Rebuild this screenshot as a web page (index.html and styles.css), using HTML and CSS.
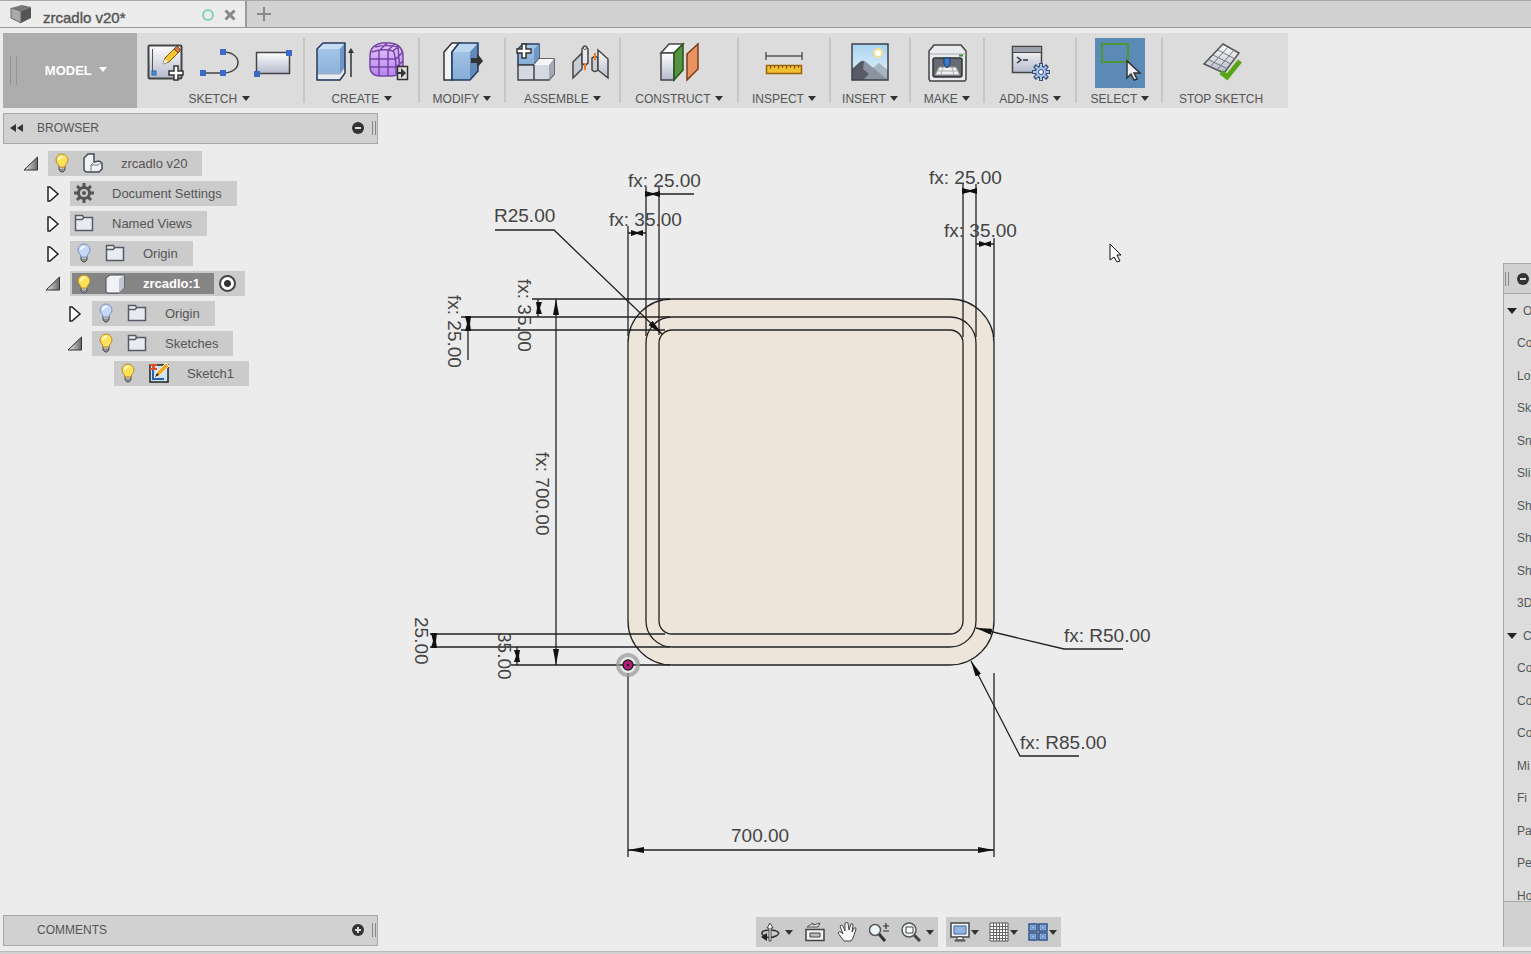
FILE: index.html
```html
<!DOCTYPE html>
<html lang="en">
  <head>
    <meta charset="UTF-8" />
    <title>zrcadlo v20*</title>
    <meta name="viewport" content="width=device-width, initial-scale=1" />
    <link rel="stylesheet" href="styles.css" />
  </head>
  <body>
    <!-- shared gradients and symbols -->
    <svg class="defs" width="0" height="0" aria-hidden="true">
      <defs>
        <linearGradient id="steel" x1="0" y1="0" x2="0" y2="1">
          <stop offset="0" stop-color="#fff" />
          <stop offset="1" stop-color="#b4bacb" />
        </linearGradient>
        <linearGradient id="blue" x1="0" y1="0" x2="0" y2="1">
          <stop offset="0" stop-color="#a9c8e8" />
          <stop offset="1" stop-color="#86add8" />
        </linearGradient>
        <linearGradient id="purple" x1="0" y1="0" x2="0" y2="1">
          <stop offset="0" stop-color="#e6c8fa" />
          <stop offset="1" stop-color="#b883ee" />
        </linearGradient>
        <linearGradient id="sky" x1="0" y1="0" x2="0" y2="1">
          <stop offset="0" stop-color="#a8d4f0" />
          <stop offset="1" stop-color="#e8f4fb" />
        </linearGradient>
        <linearGradient id="wedge" x1="0" y1="0" x2="1" y2="0">
          <stop offset="0" stop-color="#eee" />
          <stop offset="1" stop-color="#666" />
        </linearGradient>
      </defs>
      <symbol id="i-bulb-on" viewBox="0 0 20 20">
        <path d="M7 12h6v5l-2 2H9l-2-2z" fill="#8b8b93" stroke="#555" />
        <path d="M8 15h4" stroke="#eee" />
        <path d="M10 1a6 6 0 0 0-6 6c0 3 3 4 3 7h6c0-3 3-4 3-7a6 6 0 0 0-6-6z" fill="#fde25a" stroke="#b88a2c" />
        <path d="M7 7a3 3 0 0 1 4-3" fill="none" stroke="#fffbd0" stroke-width="2" />
      </symbol>
      <symbol id="i-bulb-off" viewBox="0 0 20 20">
        <path d="M7 12h6v5l-2 2H9l-2-2z" fill="#8b8b93" stroke="#555" />
        <path d="M8 15h4" stroke="#eee" />
        <path d="M10 1a6 6 0 0 0-6 6c0 3 3 4 3 7h6c0-3 3-4 3-7a6 6 0 0 0-6-6z" fill="#c5d8fa" stroke="#7d90bd" />
        <path d="M7 7a3 3 0 0 1 4-3" fill="none" stroke="#f4f8ff" stroke-width="2" />
      </symbol>
      <symbol id="i-folder" viewBox="0 0 20 20">
        <path d="M1.500 17.500v-15h7l1 2h9v13z" fill="#e9ebf0" stroke="#555b66" stroke-width="1.500" />
        <path d="M2 6.500h6l2-2" fill="none" stroke="#555b66" stroke-width="1.500" />
      </symbol>
      <symbol id="i-closed" viewBox="0 0 16 16">
        <path d="M3 1h2l8 7-8 7H3z" fill="#fff" stroke="#222" stroke-width="1.500" />
      </symbol>
      <symbol id="i-open" viewBox="0 0 16 16">
        <path d="M14.500 1v13H1z" fill="url(#wedge)" stroke="#333" />
      </symbol>
    </svg>

    <header class="tabs">
      <div class="tab">
        <svg class="tab__cube" viewBox="0 0 22 20" width="22" height="20" aria-hidden="true">
          <path d="M1 4 12 1l9 2-10 4z" fill="#777" />
          <path d="M1 4l10 3v12L1 14z" fill="#aaa" stroke="#666" />
          <path d="M11 7l10-4v11l-10 5z" fill="#555" />
        </svg>
        <span class="tab__title">zrcadlo v20*</span>
        <span class="tab__status"></span>
        <button class="tab__close" aria-label="Close tab">
          <svg viewBox="0 0 12 12" width="12" height="12"><path d="M1.500 1.500l9 9m0-9l-9 9" stroke="#888" stroke-width="3" /></svg>
        </button>
      </div>
      <button class="tabs__add" aria-label="New tab">
        <svg viewBox="0 0 14 14" width="14" height="14"><path d="M7 0v14M0 7h14" stroke="#888" stroke-width="2" /></svg>
      </button>
    </header>

    <nav class="toolbar">
      <button class="workspace">MODEL <i class="caret caret--light"></i></button>

      <div class="group group--sketch">
        <div class="group__icons">
          <button class="tool" aria-label="Create sketch">
            <svg viewBox="0 0 50 50">
              <rect x="8.500" y="7.500" width="33" height="33" rx="1" fill="url(#steel)" stroke="#444" stroke-width="2" />
              <path d="M12.500 11v25" stroke="#555" />
              <rect x="12" y="33" width="4" height="4" fill="#4a90d8" stroke="#2b62b0" />
              <path d="M23 26l2-6L37 8l4 4-12 12z" fill="#f7c531" stroke="#80570f" />
              <path d="M34 11l3-3 4 4-3 3z" fill="#c87746" stroke="#80482b" />
              <path d="M23 26l2-5 3 3z" fill="#fff" />
              <path d="M34 28h4v5h5v4h-5v5h-4v-5h-5v-4h5z" fill="#fff" stroke="#333" stroke-width="1.500" />
            </svg>
          </button>
          <button class="tool" aria-label="Line">
            <svg viewBox="0 0 50 50">
              <path d="M9 35h20c20 0 20-21 0-21" fill="none" stroke="#444" stroke-width="1.500" />
              <path d="M6 32h6v6H6zM26 32h6v6h-6zM26 11h6v6h-6z" fill="#3a6bc8" />
            </svg>
          </button>
          <button class="tool" aria-label="Rectangle">
            <svg viewBox="0 0 50 50">
              <rect x="8.500" y="14.500" width="33" height="21" fill="url(#steel)" stroke="#444" stroke-width="1.500" />
              <path d="M38 12h6v6h-6zM6 33h6v6H6z" fill="#3a6bc8" />
            </svg>
          </button>
        </div>
        <button class="group__label">SKETCH <i class="caret"></i></button>
      </div>

      <div class="group group--create">
        <div class="group__icons">
          <button class="tool" aria-label="Extrude">
            <svg viewBox="0 0 50 50">
              <path d="M7 11l6-6h22v30l-5 7H7z" fill="url(#blue)" />
              <path d="M7 11l6-6h22l-5 6z" fill="#c4dcf4" />
              <path d="M30 11l5-6v30l-5 7z" fill="#6f96c4" />
              <path d="M7 36h23l5-7v6l-5 7H7z" fill="#e9edf5" stroke="#aab" />
              <path d="M7 11l6-6h22v30l-5 7H7z" fill="none" stroke="#26395c" stroke-width="1.500" />
              <path d="M41 39V12" stroke="#333" stroke-width="1.500" />
              <path d="M38 15l3-5 3 5z" fill="#333" />
            </svg>
          </button>
          <button class="tool" aria-label="Create form">
            <svg viewBox="0 0 50 50">
              <path d="M6 18q0-11 12-13h8q12 1 13 12v11q-1 10-12 10H16Q6 38 6 28z" fill="url(#purple)" stroke="#7445a5" stroke-width="1.500" />
              <path d="M8 14q11-4 21-1 3 3 3 23M6 21h26l7-7M6 29h26l7-6M15 13v25M24 12v26M15 13l8-8M24 12l7-6M11 9q13-3 23 0l2 24M29 13l6-5" fill="none" stroke="#7445a5" stroke-width="1.500" />
              <rect x="33.500" y="28.500" width="10" height="13" fill="#ddd" stroke="#333" stroke-width="1.500" />
              <path d="M33 34h4v-4l5 5-5 5v-4h-4z" fill="#333" />
            </svg>
          </button>
        </div>
        <button class="group__label">CREATE <i class="caret"></i></button>
      </div>

      <div class="group group--modify">
        <div class="group__icons">
          <button class="tool" aria-label="Press pull">
            <svg viewBox="0 0 50 50">
              <path d="M7 14l8-9h7l-7 9v28H7z" fill="#f3f4f8" stroke="#333" stroke-width="1.500" />
              <path d="M15 14l7-9h19v28l-8 9H15z" fill="url(#blue)" />
              <path d="M15 14l7-9h19l-8 9z" fill="#bcd6f0" />
              <path d="M33 14l8-9v28l-8 9z" fill="#6289bb" />
              <path d="M15 14l7-9h19v28l-8 9H15z" fill="none" stroke="#233a60" stroke-width="1.500" />
              <path d="M34 20h6v-5l6 8-6 7v-5h-6z" fill="#333" />
            </svg>
          </button>
        </div>
        <button class="group__label">MODIFY <i class="caret"></i></button>
      </div>

      <div class="group group--assemble">
        <div class="group__icons">
          <button class="tool" aria-label="New component">
            <svg viewBox="0 0 50 50">
              <path d="M7 11l5-5h16v16l-5 5H7z" fill="url(#blue)" stroke="#233a60" stroke-width="1.500" />
              <path d="M23 11l5-5v16l-5 5z" fill="#6f96c4" />
              <path d="M7 27h16v15H7zM23 27l5-6h15v15l-5 6H23z" fill="#d5d8e2" stroke="#444" stroke-width="1.500" />
              <path d="M23 27l5-6h15l-5 6z" fill="#f6f7fa" />
              <path d="M38 27l5-6v15l-5 6z" fill="#a4a9b6" />
              <path d="M11 6h4v5h5v4h-5v5h-4v-5H6v-4h5z" fill="#fff" stroke="#333" stroke-width="1.500" />
            </svg>
          </button>
          <button class="tool" aria-label="Joint">
            <svg viewBox="0 0 50 50">
              <path d="M8 24l9-9v16l-9 9z" fill="#c8ccd6" stroke="#444" stroke-width="1.500" />
              <path d="M17 11q3-6 6 0v14q-3 4-6 0z" fill="#e6e8ee" stroke="#444" stroke-width="1.500" />
              <circle cx="20" cy="10" r="1.500" fill="#fff" stroke="#555" />
              <path d="M27 20q3-3 6 0v12q-3 3-6 0z" fill="#c8ccd6" stroke="#444" stroke-width="1.500" />
              <path d="M33 12l10 9v19l-10-8z" fill="url(#steel)" stroke="#444" stroke-width="1.500" />
              <path d="M20 25v7M30 15v7" stroke="#ef7a22" stroke-width="2" />
            </svg>
          </button>
        </div>
        <button class="group__label">ASSEMBLE <i class="caret"></i></button>
      </div>

      <div class="group group--construct">
        <div class="group__icons">
          <button class="tool" aria-label="Offset plane">
            <svg viewBox="0 0 50 50">
              <path d="M7 15l8-9h14l-9 9z" fill="#fff" stroke="#444" stroke-width="1.500" />
              <path d="M7 15h13v27H7z" fill="url(#steel)" stroke="#444" stroke-width="1.500" />
              <path d="M20 15l9-9v26l-9 10z" fill="#55933f" stroke="#2b5420" stroke-width="1.500" />
              <path d="M33 16L44 6v25L33 42z" fill="#e99361" stroke="#7d3c1c" stroke-width="1.500" />
            </svg>
          </button>
        </div>
        <button class="group__label">CONSTRUCT <i class="caret"></i></button>
      </div>

      <div class="group group--inspect">
        <div class="group__icons">
          <button class="tool" aria-label="Measure">
            <svg viewBox="0 0 50 50">
              <path d="M7 18h36M7 14v8M43 14v8" stroke="#555" stroke-width="1.500" />
              <rect x="7.500" y="27.500" width="35" height="8" fill="#f0bf2e" stroke="#96600f" stroke-width="1.500" />
              <path d="M11.500 28v3M15.500 28v2M19.500 28v3M23.500 28v2M27.500 28v3M31.500 28v2M35.500 28v3M39.500 28v2" stroke="#7a5210" />
            </svg>
          </button>
        </div>
        <button class="group__label">INSPECT <i class="caret"></i></button>
      </div>

      <div class="group group--insert">
        <div class="group__icons">
          <button class="tool" aria-label="Insert image">
            <svg viewBox="0 0 50 50">
              <rect x="7" y="6" width="36" height="36" fill="url(#sky)" />
              <circle cx="33" cy="15" r="4" fill="#fff" stroke="#f6df8b" stroke-width="2" />
              <path d="M25 32l9-7 9 7v10H25z" fill="#a6b3c0" />
              <path d="M7 31l8-7q3-3 6 0l22 18H7z" fill="#8c93a0" />
              <path d="M7 31l8-7q3-2 4 0l-1 7 6 5-6 6H7z" fill="#565b67" />
              <rect x="7" y="6" width="36" height="36" fill="none" stroke="#3c404a" stroke-width="1.500" />
            </svg>
          </button>
        </div>
        <button class="group__label">INSERT <i class="caret"></i></button>
      </div>

      <div class="group group--make">
        <div class="group__icons">
          <button class="tool" aria-label="3D print">
            <svg viewBox="0 0 50 50">
              <path d="M7 13l5-6h27l5 6v28l-1 2H8l-1-2z" fill="#e9ebef" stroke="#444" stroke-width="1.500" />
              <path d="M8 16h36" stroke="#aaa" />
              <rect x="11" y="20" width="29" height="19" rx="2" fill="#666a72" stroke="#333" stroke-width="1.500" />
              <path d="M17 29h17l4 8H13z" fill="#f0f0f2" stroke="#888" />
              <path d="M15 33h21M21 29l-2 8M30 29l2 8" stroke="#aaa" />
              <path d="M22 20h6v6l-3 4-3-4z" fill="#3c79c9" stroke="#173c75" />
              <path d="M37 17.500h4" stroke="#2c9a28" stroke-width="2" />
            </svg>
          </button>
        </div>
        <button class="group__label">MAKE <i class="caret"></i></button>
      </div>

      <div class="group group--addins">
        <div class="group__icons">
          <button class="tool" aria-label="Scripts and add-ins">
            <svg viewBox="0 0 50 50">
              <rect x="7.500" y="8.500" width="29" height="26" fill="url(#steel)" stroke="#444" stroke-width="1.500" />
              <path d="M8 9h28v5H8z" fill="#9ba0aa" />
              <path d="M8 14.500h28" stroke="#444" />
              <path d="M12 19l4 3-4 3M18 22h5" fill="none" stroke="#333" stroke-width="1.500" />
              <path d="M36 25v18M27 34h18M29.500 27.500l13 13M42.500 27.500l-13 13" stroke="#34507d" stroke-width="4" />
              <circle cx="36" cy="34" r="6.500" fill="#34507d" />
              <path d="M36 26v16M28 34h16M30.500 28.500l11 11M41.500 28.500l-11 11" stroke="#a9c3e8" stroke-width="2" />
              <circle cx="36" cy="34" r="5" fill="#a9c3e8" />
              <circle cx="36" cy="34" r="2.500" fill="#fff" stroke="#34507d" />
            </svg>
          </button>
        </div>
        <button class="group__label">ADD-INS <i class="caret"></i></button>
      </div>

      <div class="group group--select">
        <div class="group__icons">
          <button class="tool tool--active" aria-label="Select">
            <svg viewBox="0 0 50 50">
              <rect x="7" y="6" width="26" height="18" fill="none" stroke="#4c9a0c" stroke-width="1.500" />
              <path d="M32 23v17l4-4 3 6 3-1-3-6h6z" fill="#eef0f5" stroke="#333" stroke-width="1.500" />
            </svg>
          </button>
        </div>
        <button class="group__label">SELECT <i class="caret"></i></button>
      </div>

      <div class="group group--stop">
        <div class="group__icons">
          <button class="tool" aria-label="Stop sketch">
            <svg viewBox="0 0 50 50">
              <path d="M27 6l16 9-15 20-20-9z" fill="url(#steel)" stroke="#555" stroke-width="1.500" />
              <path d="M32 9L14 29M38 12L21 32M22 12l17 9M17 17l18 9M13 22l19 9" stroke="#777" />
              <path d="M25 34l6 5 13-16" fill="none" stroke="#58a618" stroke-width="5" />
            </svg>
          </button>
        </div>
        <button class="group__label">STOP SKETCH</button>
      </div>
    </nav>

    <main class="main">
      <aside class="side">
        <section>
          <div class="panel-bar">
            <svg viewBox="0 0 14 8" width="14" height="8" aria-hidden="true"><path d="M0 4l6-4v8zM7 4l6-4v8z" fill="#333" /></svg>
            <h2 class="panel-bar__title">BROWSER</h2>
            <button class="panel-bar__button" aria-label="Collapse browser">
              <svg viewBox="0 0 12 12" width="12" height="12"><circle cx="6" cy="6" r="6" fill="#333" /><path d="M3 6h6" stroke="#ddd" stroke-width="2" /></svg>
            </button>
            <span class="grip"></span>
          </div>

          <ul class="tree">
            <li>
              <div class="tree__row">
                <button class="toggle" aria-label="Collapse"><svg class="toggle__icon"><use href="#i-open" /></svg></button>
                <div class="chip">
                  <svg class="chip__bulb"><use href="#i-bulb-on" /></svg>
                  <svg class="chip__icon" viewBox="0 0 20 20">
                    <path d="M1 5l4-4h6v8l5-1 3 2v6l-3 3H3l-2-2z" fill="#f1f2f6" stroke="#444c58" stroke-width="1.500" />
                    <path d="M8 19v-7l3-3M8 12h7l4-3" fill="none" stroke="#777" />
                  </svg>
                  <span>zrcadlo v20</span>
                </div>
              </div>
              <ul>
                <li>
                  <div class="tree__row">
                    <button class="toggle" aria-label="Expand"><svg class="toggle__icon"><use href="#i-closed" /></svg></button>
                    <div class="chip">
                      <svg class="chip__icon" viewBox="0 0 20 20">
                        <path d="M10 0v4M10 16v4M0 10h4M16 10h4M3 3l3 3M14 14l3 3M17 3l-3 3M6 14l-3 3" stroke="#555" stroke-width="3" />
                        <circle cx="10" cy="10" r="5.500" fill="none" stroke="#555" stroke-width="3" />
                        <circle cx="10" cy="10" r="2" fill="#555" />
                      </svg>
                      <span>Document Settings</span>
                    </div>
                  </div>
                </li>
                <li>
                  <div class="tree__row">
                    <button class="toggle" aria-label="Expand"><svg class="toggle__icon"><use href="#i-closed" /></svg></button>
                    <div class="chip">
                      <svg class="chip__icon"><use href="#i-folder" /></svg>
                      <span>Named Views</span>
                    </div>
                  </div>
                </li>
                <li>
                  <div class="tree__row">
                    <button class="toggle" aria-label="Expand"><svg class="toggle__icon"><use href="#i-closed" /></svg></button>
                    <div class="chip">
                      <svg class="chip__bulb"><use href="#i-bulb-off" /></svg>
                      <svg class="chip__icon"><use href="#i-folder" /></svg>
                      <span>Origin</span>
                    </div>
                  </div>
                </li>
                <li>
                  <div class="tree__row">
                    <button class="toggle" aria-label="Collapse"><svg class="toggle__icon"><use href="#i-open" /></svg></button>
                    <div class="chip chip--active">
                      <div class="chip__selected">
                        <svg class="chip__bulb"><use href="#i-bulb-on" /></svg>
                        <svg class="chip__icon" viewBox="0 0 20 20">
                          <path d="M1 4l4-3h14v13l-5 5H2l-1-2z" fill="#f1f2f6" stroke="#444c58" />
                          <path d="M14 5l5-4v13l-5 5z" fill="#c3c6ce" />
                        </svg>
                        <label for="activate">zrcadlo:1</label>
                      </div>
                      <input class="chip__radio" type="radio" id="activate" checked />
                    </div>
                  </div>
                  <ul>
                    <li>
                      <div class="tree__row">
                        <button class="toggle" aria-label="Expand"><svg class="toggle__icon"><use href="#i-closed" /></svg></button>
                        <div class="chip">
                          <svg class="chip__bulb"><use href="#i-bulb-off" /></svg>
                          <svg class="chip__icon"><use href="#i-folder" /></svg>
                          <span>Origin</span>
                        </div>
                      </div>
                    </li>
                    <li>
                      <div class="tree__row">
                        <button class="toggle" aria-label="Collapse"><svg class="toggle__icon"><use href="#i-open" /></svg></button>
                        <div class="chip">
                          <svg class="chip__bulb"><use href="#i-bulb-on" /></svg>
                          <svg class="chip__icon"><use href="#i-folder" /></svg>
                          <span>Sketches</span>
                        </div>
                      </div>
                      <ul>
                        <li>
                          <div class="tree__row tree__row--leaf">
                            <div class="chip">
                              <svg class="chip__bulb"><use href="#i-bulb-on" /></svg>
                              <svg class="chip__icon" viewBox="0 0 20 20">
                                <rect x="1" y="2" width="18" height="17" fill="#cfe3f7" stroke="#222" stroke-width="1.500" />
                                <path d="M4 6v10h11" fill="none" stroke="#2b62b0" stroke-width="2" />
                                <path d="M6 14l2-5 9-9 3 3-9 9z" fill="#f5a623" stroke="#fff5c0" />
                                <path d="M6 14l2-4 2 2z" fill="#222" />
                                <path d="M1 1h7v2H6v2h2v2H1V5h2V3H1z" fill="#e0502a" />
                              </svg>
                              <span>Sketch1</span>
                            </div>
                          </div>
                        </li>
                      </ul>
                    </li>
                  </ul>
                </li>
              </ul>
            </li>
          </ul>
        </section>

        <div class="panel-bar">
          <h2 class="panel-bar__title panel-bar__title--indent">COMMENTS</h2>
          <button class="panel-bar__button" aria-label="Add comment">
            <svg viewBox="0 0 12 12" width="12" height="12"><circle cx="6" cy="6" r="6" fill="#333" /><path d="M3 6h6M6 3v6" stroke="#ddd" stroke-width="2" /></svg>
          </button>
          <span class="grip"></span>
        </div>
      </aside>

      <section class="viewport">
        <svg class="drawing" viewBox="378 108 1125 809">
          <defs>
            <marker id="arrow" viewBox="0 0 16 6" refX="16" refY="3" markerWidth="16" markerHeight="6" markerUnits="userSpaceOnUse" orient="auto-start-reverse">
              <path d="M0 0l16 3-16 3z" fill="#111" />
            </marker>
          </defs>

          <!-- profile -->
          <g class="profile">
            <rect x="628" y="299" width="366" height="366" rx="44" />
            <rect x="646" y="317" width="330" height="330" rx="26" />
            <rect x="659" y="330" width="304" height="304" rx="13" />
          </g>

          <!-- extension lines -->
          <path class="line" d="M628 226v110M646 187v149M659 187v148M963 184v153M976 184v153M994 238v99" />
          <path class="line" d="M532 299h138M461 317h209M461 330h204M430 634h235M430 647h240M511 665h159" />
          <path class="line" d="M628 673v184M994 673v184" />

          <!-- dimension lines -->
          <path class="line" d="M628 850h366" marker-start="url(#arrow)" marker-end="url(#arrow)" />
          <path class="line" d="M556 299v366" marker-start="url(#arrow)" marker-end="url(#arrow)" />
          <path class="line" d="M495 230h59L662 334" marker-end="url(#arrow)" />
          <path class="line" d="M1123 649h-59L976 628" marker-end="url(#arrow)" />
          <path class="line" d="M1079 756h-59L971 661" marker-end="url(#arrow)" />
          <path class="line" d="M646 194h48M628 233h18M963 191h13M976 244h18M538 299v18M468 317v43M434 634v13M517 647v18" />

          <g fill="#111">
            <path d="M645 191l8 2 7-2v6l-7-2-8 2z" />
            <path d="M631 230l6 2 6-2v6l-6-2-6 2z" />
            <path d="M962 188l8 2 7-2v6l-7-2-8 2z" />
            <path d="M979 241l6 2 6-2v6l-6-2-6 2z" />
            <path d="M536 302l1 6-1 6h6l-2-6 2-6z" />
            <path d="M465 316l2 8-2 7h6l-1-7 1-8z" />
            <path d="M431 633l2 8-2 7h6l-1-7 1-8z" />
            <path d="M514 650l2 6-2 6h6l-1-6 1-6z" />
          </g>

          <g class="dims">
            <text x="628" y="187">fx: 25.00</text>
            <text x="609" y="226">fx: 35.00</text>
            <text x="494" y="222">R25.00</text>
            <text x="929" y="184">fx: 25.00</text>
            <text x="944" y="237">fx: 35.00</text>
            <text x="1064" y="642">fx: R50.00</text>
            <text x="1020" y="749">fx: R85.00</text>
            <text x="731" y="842">700.00</text>
            <text transform="translate(518 279) rotate(90)">fx: 35.00</text>
            <text transform="translate(448 295) rotate(90)">fx: 25.00</text>
            <text transform="translate(536 452) rotate(90)">fx: 700.00</text>
            <text transform="translate(415 617) rotate(90)">25.00</text>
            <text transform="translate(498 632) rotate(90)">35.00</text>
          </g>

          <!-- origin point -->
          <circle cx="628" cy="665" r="10" fill="none" stroke="#999" stroke-opacity="0.700" stroke-width="4" />
          <circle cx="628" cy="665" r="5" fill="#c0187f" stroke="#222" stroke-width="1.500" />
          <circle cx="628" cy="665" r="1.500" fill="#222" />

          <path d="M1110 244v16l4-3 3 5 3-1-3-6h4z" fill="#fff" stroke="#111" />
        </svg>

        <div class="navbar">
          <div class="navbar__group">
            <button class="nav-tool nav-tool--menu" aria-label="Orbit">
              <svg viewBox="0 0 20 20"><path d="M6 15C-2 11 3 8 10 8s12 3 6 6-8 1-12 1" fill="none" stroke="#333" stroke-width="1.500" /><path d="M9 19V6H7l3-5 3 5h-2v13z" fill="#fff" stroke="#444" /><path d="M1 15l6-4v8z" fill="#222" /></svg>
              <i class="caret"></i>
            </button>
            <button class="nav-tool" aria-label="Look at">
              <svg viewBox="0 0 20 20"><path d="M1 7.500h18v11H1z" fill="#f3f3f5" stroke="#444" stroke-width="1.500" /><path d="M5 11h10v4H5z" fill="#b9bdc7" stroke="#444" /><path d="M2 5l6-4v2l7-2-2 4z" fill="#ddd" stroke="#555" /></svg>
            </button>
            <button class="nav-tool" aria-label="Pan">
              <svg viewBox="0 0 20 20"><path d="M7 19l-6-8q1-2 3-1l2 2L3 4q1-2 3 0l2 5V1q2-1 3 0l1 7 2-6q2-1 2 1l-1 7 2-4q2-1 2 1l-3 9-2 3z" fill="#fafafa" stroke="#444" /></svg>
            </button>
            <button class="nav-tool" aria-label="Zoom">
              <svg viewBox="0 0 20 20"><path d="M10 12l6 7" stroke="#333" stroke-width="3" /><circle cx="6" cy="8" r="5.500" fill="#eaf6f8" stroke="#555" stroke-width="1.500" /><path d="M14 4h6M17 1v6M14 9h6" stroke="#333" stroke-width="1.200" /></svg>
            </button>
            <button class="nav-tool nav-tool--menu" aria-label="Fit">
              <svg viewBox="0 0 20 20"><path d="M13 13l6 6" stroke="#444" stroke-width="3" /><circle cx="8" cy="8" r="7" fill="#eaf6f8" stroke="#555" stroke-width="1.500" /><path d="M5 5h7v6H5z" fill="#fff" stroke="#444" /></svg>
              <i class="caret"></i>
            </button>
          </div>
          <div class="navbar__group navbar__group--view">
            <button class="nav-tool nav-tool--menu" aria-label="Display settings">
              <svg viewBox="0 0 20 20"><path d="M1 1h18v14H1z" fill="#eef0f3" stroke="#444" stroke-width="1.500" /><path d="M4 4h12v8H4z" fill="#91b5de" stroke="#3e649d" /><path d="M7 15h6v3H7zM5 18h10v1H5z" fill="#fff" stroke="#444" /></svg>
              <i class="caret"></i>
            </button>
            <button class="nav-tool nav-tool--menu" aria-label="Grid and snaps">
              <svg viewBox="0 0 20 20"><path d="M1 1h18v18H1z" fill="#fff" stroke="#555" /><path d="M4.500 1v18M7.500 1v18M10.500 1v18M13.500 1v18M16.500 1v18M1 4.500h18M1 7.500h18M1 10.500h18M1 13.500h18M1 16.500h18" stroke="#666" /></svg>
              <i class="caret"></i>
            </button>
            <button class="nav-tool nav-tool--menu" aria-label="Viewports">
              <svg viewBox="0 0 20 20"><path d="M1 2h8v7H1zM11 2h8v7h-8zM1 11h8v7H1zM11 11h8v7h-8z" fill="#9fc0e8" stroke="#2f5088" stroke-width="1.500" /><path d="M3 4h4v3H3zM13 4h4v3h-4zM3 13h4v3H3zM13 13h4v3h-4z" fill="none" stroke="#5b82b8" /></svg>
              <i class="caret"></i>
            </button>
          </div>
        </div>
      </section>

      <aside class="palette">
        <div class="palette__bar">
          <span class="grip"></span>
          <button class="panel-bar__button" aria-label="Collapse palette">
            <svg viewBox="0 0 12 12" width="12" height="12"><circle cx="6" cy="6" r="6" fill="#333" /><path d="M3 6h6" stroke="#ddd" stroke-width="2" /></svg>
          </button>
        </div>
        <ul class="palette__list">
          <li class="palette__heading">O</li>
          <li>Co</li>
          <li>Lo</li>
          <li>Sk</li>
          <li>Sn</li>
          <li>Sli</li>
          <li>Sh</li>
          <li>Sh</li>
          <li>Sh</li>
          <li>3D</li>
          <li class="palette__heading">C</li>
          <li>Co</li>
          <li>Co</li>
          <li>Co</li>
          <li>Mi</li>
          <li>Fi</li>
          <li>Pa</li>
          <li>Pe</li>
          <li>Ho</li>
        </ul>
        <div class="palette__footer"></div>
      </aside>
    </main>
    <footer class="strip"></footer>
  </body>
</html>
```

FILE: styles.css
```css
:root {
  --color-bg: #ececec;
  --color-bar: #dcdcdc;
  --color-panel: #d1d1d1;
  --color-chip: #cbcbcb;
  --color-line: #a8a8a8;
  --color-text: #555;
}

*,
*::before,
*::after {
  box-sizing: border-box;
}

body {
  margin: 0;
  height: 100vh;
  display: flex;
  flex-direction: column;
  overflow: hidden;
  font-family: "Liberation Sans", Arial, sans-serif;
  font-size: 12px;
  background-color: var(--color-bg);
  color: var(--color-text);
}

button {
  padding: 0;
  border: 0;
  background: none;
  font: inherit;
  color: inherit;
}

svg {
  display: block;
}

ul {
  margin: 0;
  padding: 0;
  list-style: none;
}

.defs {
  position: absolute;
}

.caret {
  display: inline-block;
  border: 4px solid transparent;
  border-top: 5px solid #333;
  border-bottom: 0;
}

.caret--light {
  border-top-color: #fff;
}

/* Document tabs */
.tabs {
  flex-shrink: 0;
  display: flex;
  height: 28px;
  border-top: 1px solid var(--color-line);
  border-bottom: 1px solid #999;
  background-color: #d2d2d2;
}

.tab {
  display: flex;
  align-items: center;
  width: 247px;
  padding: 2px 9px 0 10px;
  border-right: 2px solid #999;
  background-color: var(--color-bg);
}

.tab__cube {
  margin-bottom: 2px;
}

.tab__title {
  flex: 1;
  padding: 5px 0 0 11px;
  font-size: 15px;
  line-height: 20px;
  -webkit-text-stroke: 0.4px;
}

.tab__status {
  width: 12px;
  height: 12px;
  margin-right: 10px;
  border: 2px solid #7fd0bb;
  border-radius: 50%;
}

.tabs__add {
  margin-left: 10px;
}

/* Toolbar */
.toolbar {
  flex-shrink: 0;
  align-self: flex-start;
  display: flex;
  height: 75px;
  margin: 5px 3px 0;
  background-color: var(--color-bar);
}

.workspace {
  width: 134px;
  padding-left: 12px;
  background: linear-gradient(#949494, #949494) 7px 50% / 1px 29px no-repeat,
    linear-gradient(#949494, #949494) 13px 50% / 1px 29px no-repeat,
    #adadad;
  color: #fff;
  font-size: 13px;
  font-weight: 700;
}

.workspace .caret {
  margin: 0 0 3px 4px;
}

.group {
  display: flex;
  flex-direction: column;
  align-items: center;
  padding: 5px 2px 0 0;
  background: linear-gradient(#c6c6c6, #c6c6c6) 100% 5px / 2px 65px no-repeat;
}

.group--sketch {
  width: 168px;
  padding-right: 4px;
}

.group--create,
.group--assemble {
  width: 115px;
}

.group--construct {
  width: 118px;
}

.group--modify,
.group--select {
  width: 86px;
}

.group--inspect,
.group--addins {
  width: 92px;
}

.group--insert {
  width: 80px;
}

.group--make {
  width: 74px;
}

.group--select {
  padding-right: 0;
}

.group--stop {
  width: 125px;
  padding-right: 9px;
  background: none;
}

.group__icons {
  display: flex;
  gap: 4px;
}

.tool {
  width: 50px;
  height: 50px;
}

.tool--active {
  background-color: #5a8ab5;
}

.group__label {
  height: 20px;
  margin-top: 1px;
  white-space: nowrap;
}

.group__label .caret {
  margin: 0 0 2px 1px;
}

/* Main area */
.main {
  flex: 1;
  min-height: 0;
  display: grid;
  grid-template-columns: 378px 1fr 28px;
  grid-template-rows: minmax(0, 1fr);
}

.side {
  display: flex;
  flex-direction: column;
  justify-content: space-between;
  padding: 5px 0 5px 3px;
}

.panel-bar {
  display: flex;
  align-items: center;
  height: 31px;
  padding: 0 1px 1px 6px;
  border: 1px solid var(--color-line);
  background-color: var(--color-panel);
}

.panel-bar__title {
  flex: 1;
  margin: 0 0 0 13px;
  font-size: 12px;
  font-weight: 400;
}

.panel-bar__title--indent {
  margin-left: 27px;
}

.grip {
  width: 4px;
  height: 14px;
  margin-left: 8px;
  border: 1px solid #888;
  border-width: 0 1px;
}

.tree {
  padding: 7px 0 0 17px;
}

.tree ul {
  padding-left: 22px;
}

.tree__row {
  display: flex;
  align-items: center;
  height: 25px;
  margin-bottom: 5px;
}

.tree__row--leaf {
  padding-left: 28px;
}

.toggle {
  width: 16px;
  height: 16px;
  margin: 0 9px 0 3px;
}

.toggle__icon {
  width: 16px;
  height: 16px;
}

.chip {
  display: flex;
  align-items: center;
  height: 25px;
  padding: 0 15px 1px 4px;
  background-color: var(--color-chip);
  font-size: 13px;
}

.chip__bulb,
.chip__icon {
  width: 20px;
  height: 20px;
}

.chip__bulb {
  margin-right: 11px;
}

.chip__icon {
  margin-right: 18px;
}

.chip--active {
  gap: 5px;
  padding: 0 9px 0 2px;
}

.chip__selected {
  display: flex;
  align-items: center;
  height: 21px;
  padding: 0 14px 0 2px;
  background-color: #858585;
  color: #fff;
  font-weight: 700;
}

.chip__radio {
  appearance: none;
  width: 17px;
  height: 17px;
  margin: 0;
  border: 2px solid #444;
  border-radius: 50%;
  background: radial-gradient(#333 3px, #fff 4px);
}

/* Sketch viewport */
.viewport {
  display: flex;
  flex-direction: column;
  min-width: 0;
}

.drawing {
  flex: 1;
  width: 100%;
  min-height: 0;
}

.profile rect {
  fill: #ede4da;
  stroke: #222;
  stroke-width: 1.3;
}

.line {
  fill: none;
  stroke: #222;
  stroke-width: 1.3;
}

.dims {
  fill: #444;
  font-size: 19px;
}

.navbar {
  display: flex;
  justify-content: center;
  gap: 8px;
  margin-bottom: 4px;
  padding-right: 64px;
}

.navbar__group {
  display: flex;
  align-items: center;
  gap: 12px;
  height: 30px;
  padding: 0 4px;
  background-color: var(--color-chip);
}

.navbar__group--view {
  gap: 10px;
}

.nav-tool svg {
  width: 20px;
  height: 20px;
}

.nav-tool--menu {
  display: flex;
  align-items: center;
  gap: 5px;
}

.navbar__group--view .nav-tool--menu {
  gap: 1px;
}

/* Sketch palette */
.palette {
  display: flex;
  flex-direction: column;
  min-width: 0;
  margin: 155px 0 4px;
  overflow: hidden;
  border-left: 1px solid var(--color-line);
  background-color: var(--color-bar);
}

.palette__bar {
  flex-shrink: 0;
  display: flex;
  align-items: center;
  gap: 8px;
  height: 31px;
  border: 1px solid var(--color-line);
  border-width: 1px 0;
  background-color: var(--color-panel);
}

.palette__bar .grip {
  flex-shrink: 0;
  margin-left: 1px;
}

.palette__list {
  flex: 1;
  min-height: 0;
  padding-top: 1px;
  overflow: hidden;
}

.palette__list li {
  height: 33px;
  padding-left: 13px;
  line-height: 33px;
  white-space: nowrap;
}

.palette__list li:nth-child(odd) {
  height: 32px;
}

.palette__list .palette__heading {
  display: flex;
  align-items: center;
  gap: 6px;
  padding-left: 3px;
}

.palette__heading::before {
  content: "";
  flex-shrink: 0;
  border: 5px solid transparent;
  border-top: 6px solid #222;
  border-bottom: 0;
}

.palette__footer {
  flex-shrink: 0;
  height: 46px;
  border-top: 1px solid var(--color-line);
  background-color: var(--color-panel);
}

.strip {
  flex-shrink: 0;
  height: 3px;
  border-top: 1px solid #bbb;
  background-color: var(--color-panel);
}
```
